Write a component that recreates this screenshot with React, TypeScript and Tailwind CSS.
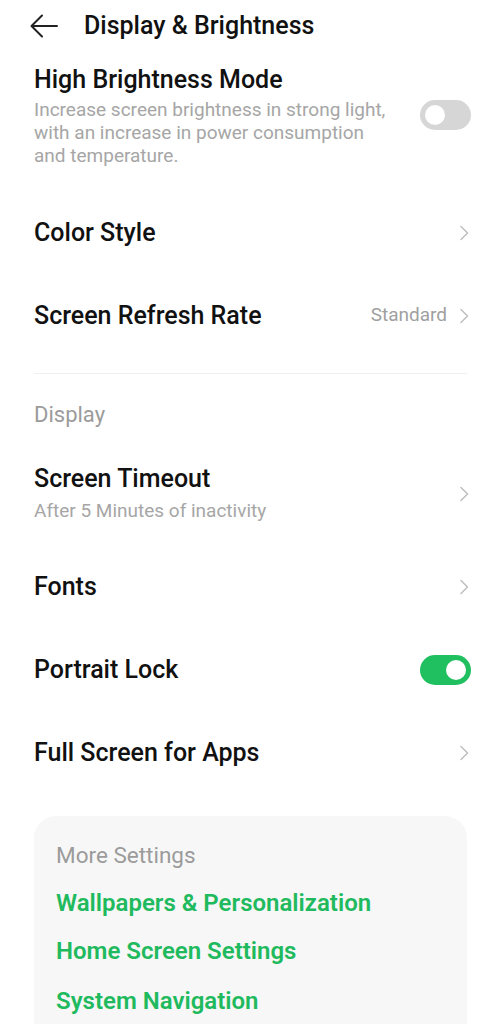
import React from 'react';

const font = { fontFamily: 'Roboto, "Noto Sans", sans-serif' };

const Chevron: React.FC = () => (
  <svg width="10" height="16" viewBox="0 0 10 16" fill="none" className="shrink-0 -mr-[2px]">
    <path d="M2 1.5 L8.5 8 L2 14.5" stroke="#bcbcbc" strokeWidth="1.4" strokeLinecap="round" strokeLinejoin="round" />
  </svg>
);

const Toggle: React.FC<{ on?: boolean }> = ({ on }) => (
  <div
    className={`w-[51px] h-[30px] rounded-full flex items-center px-[5px] shrink-0 ${
      on ? 'bg-[#20bf5f] justify-end' : 'bg-[#d6d6d6] justify-start'
    }`}
  >
    <div className="w-[20px] h-[20px] rounded-full bg-white" />
  </div>
);

const Row: React.FC<{ title: string; value?: string; right?: React.ReactNode }> = ({ title, value, right }) => (
  <div className="h-[83px] flex items-center justify-between">
    <span className="text-[25px] leading-[30px] font-medium text-[#111]">{title}</span>
    <div className="flex items-center gap-[12px]">
      {value && <span className="text-[19px] text-[#a0a0a0]">{value}</span>}
      {right ?? <Chevron />}
    </div>
  </div>
);

const App: React.FC = () => {
  const moreLinks = ['Wallpapers & Personalization', 'Home Screen Settings', 'System Navigation'];

  return (
    <div className="w-[501px] h-[1024px] bg-white overflow-hidden" style={font}>
      {/* Header */}
      <div className="h-[51px] flex items-center pl-[30px]">
        <svg width="28" height="24" viewBox="0 0 28 24" fill="none">
          <path d="M27 12 H2 M12 1.5 L1.5 12 L12 22.5" stroke="#222" strokeWidth="2" strokeLinecap="round" strokeLinejoin="round" />
        </svg>
        <h1 className="ml-[26px] text-[25px] leading-[30px] font-medium text-[#111]">Display &amp; Brightness</h1>
      </div>

      <div className="px-[34px]">
        {/* High Brightness Mode */}
        <div className="pt-[14px] pb-[24px] flex items-start justify-between">
          <div className="w-[362px]">
            <div className="text-[25px] leading-[30px] font-medium text-[#111]">High Brightness Mode</div>
            <div className="mt-[3px] text-[19px] leading-[23px] text-[#a6a6a6]">
              Increase screen brightness in strong light, with an increase in power consumption and temperature.
            </div>
          </div>
          <div className="mt-[35px] -mr-[4px]">
            <Toggle />
          </div>
        </div>

        <Row title="Color Style" />
        <Row title="Screen Refresh Rate" value="Standard" />

        <div className="mt-[16px] border-t border-[#f0f0f0]" />

        {/* Display section */}
        <div className="pt-[28px] text-[22px] leading-[26px] text-[#9b9b9b]">Display</div>

        <div className="pt-[36px] pb-[22px] flex items-center justify-between">
          <div>
            <div className="text-[25px] leading-[30px] font-medium text-[#111]">Screen Timeout</div>
            <div className="mt-[5px] text-[19px] leading-[24px] text-[#a6a6a6]">After 5 Minutes of inactivity</div>
          </div>
          <Chevron />
        </div>

        <Row title="Fonts" />
        <Row title="Portrait Lock" right={<div className="-mr-[4px]"><Toggle on /></div>} />
        <Row title="Full Screen for Apps" />

        {/* More settings card */}
        <div className="mt-[22px] bg-[#f7f7f7] rounded-[22px] px-[22px] pt-[26px] pb-[30px]">
          <div className="text-[22.5px] leading-[26px] text-[#9b9b9b]">More Settings</div>
          <div className="mt-[20px] text-[24px] leading-[30px] font-semibold text-[#1fba5e]">{moreLinks[0]}</div>
          <div className="mt-[18px] text-[24px] leading-[30px] font-semibold text-[#1fba5e]">{moreLinks[1]}</div>
          <div className="mt-[20px] text-[24px] leading-[30px] font-semibold text-[#1fba5e]">{moreLinks[2]}</div>
        </div>
      </div>
    </div>
  );
};

export default App;
